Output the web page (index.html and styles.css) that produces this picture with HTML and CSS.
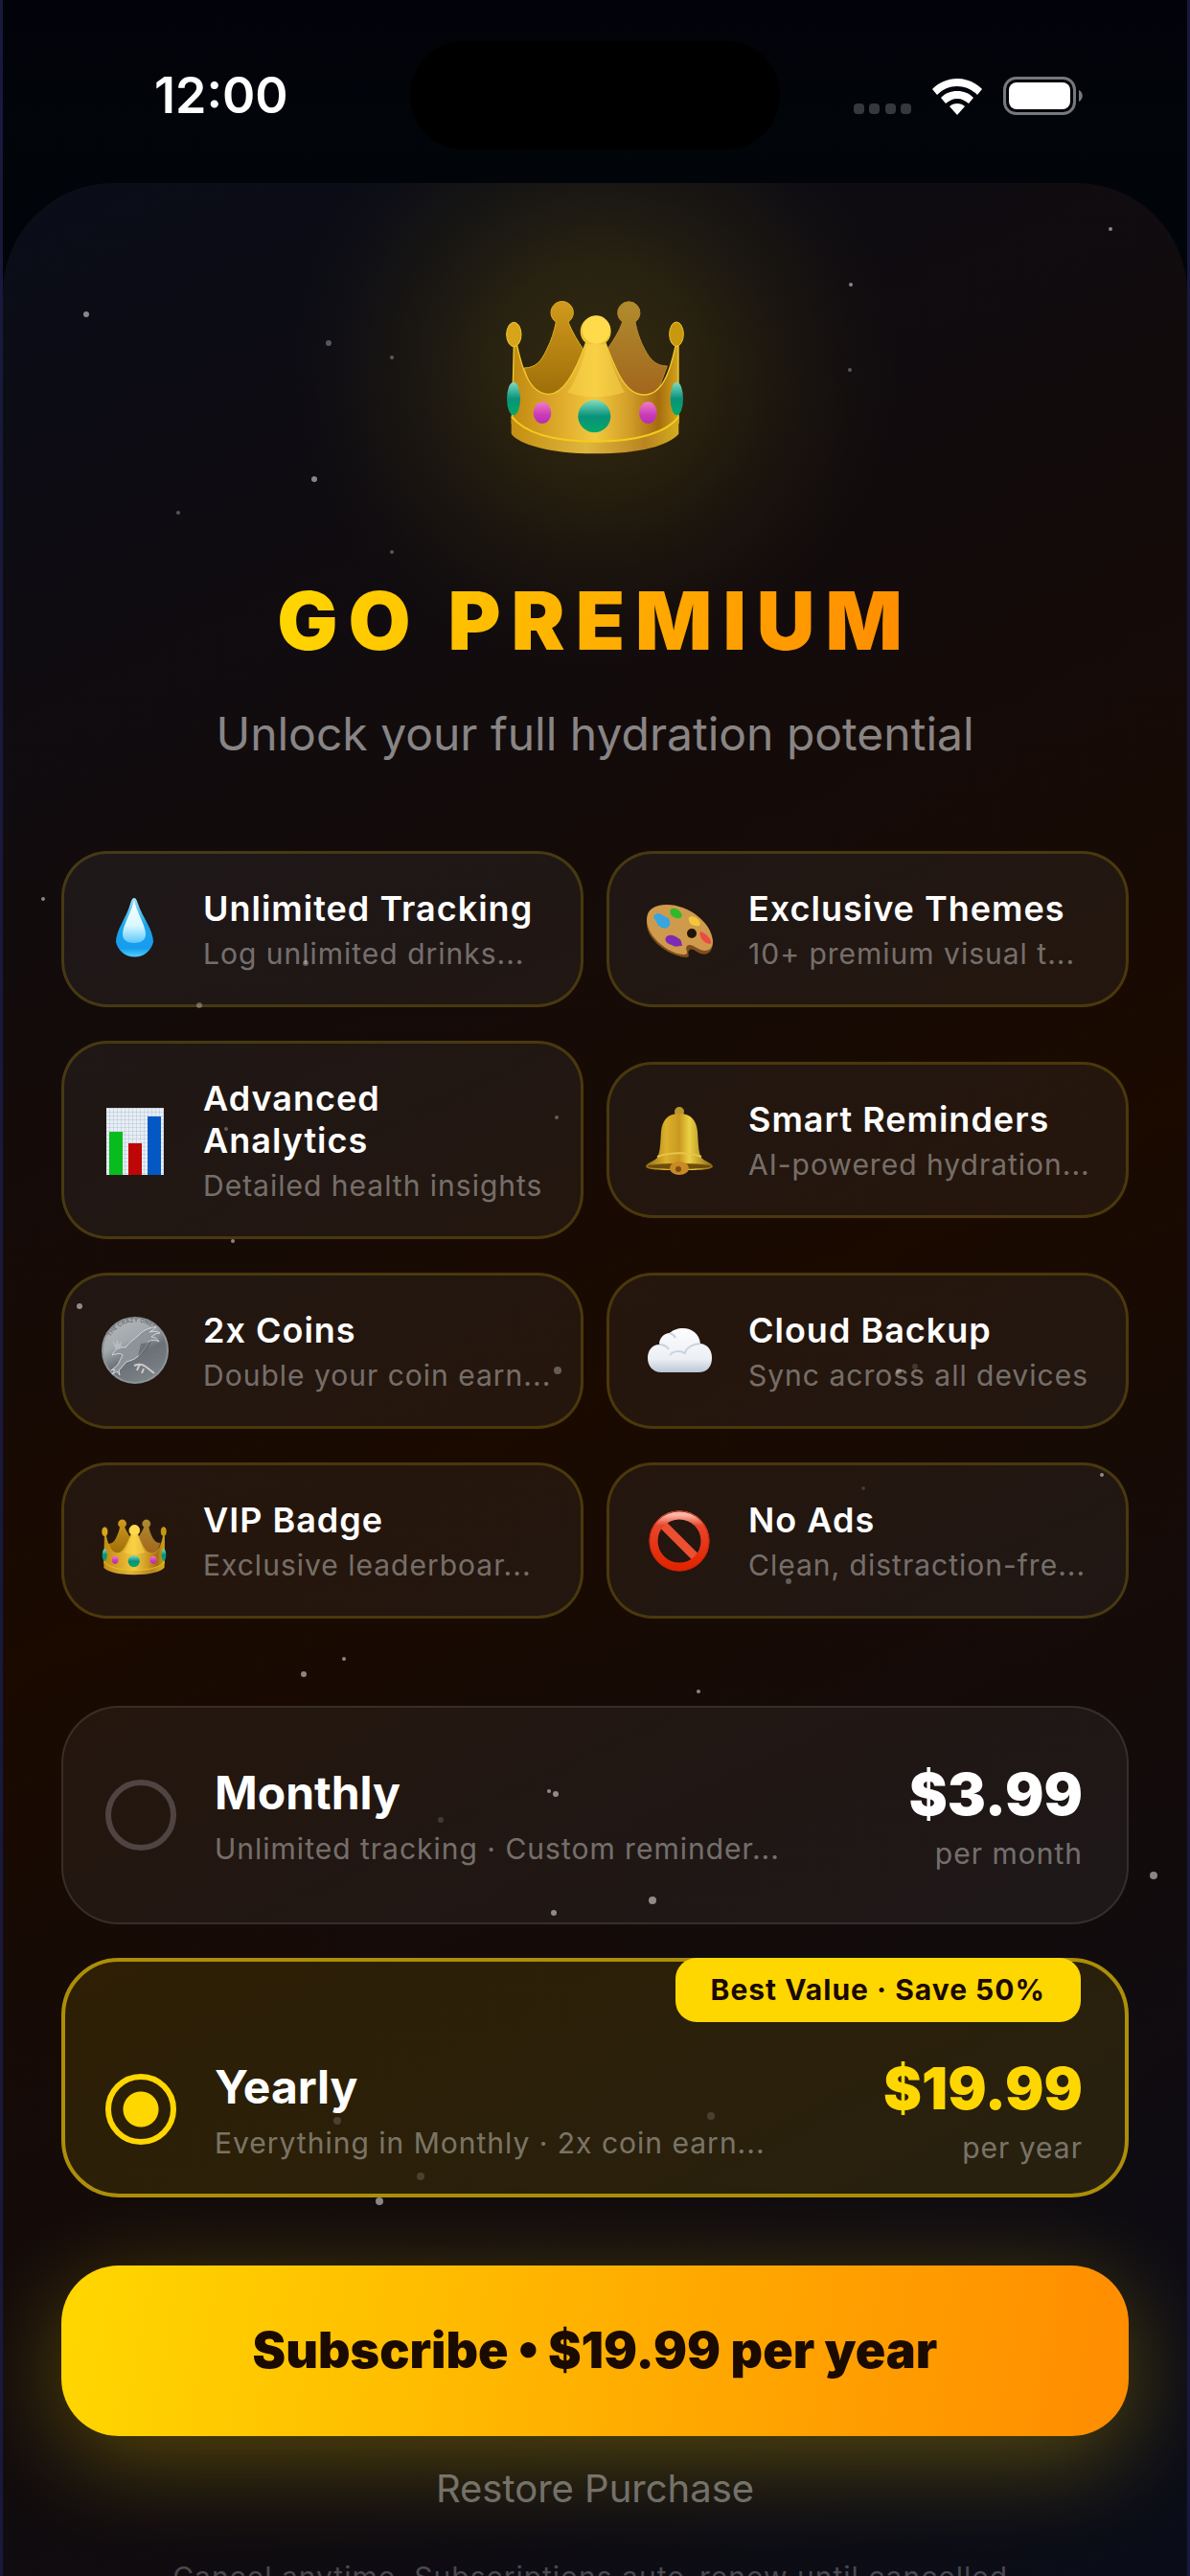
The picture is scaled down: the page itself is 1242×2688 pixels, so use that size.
FILE: index.html
```
<!DOCTYPE html>
<html lang="en">
<head>
    <meta charset="UTF-8">
    <meta name="viewport" content="width=device-width, initial-scale=1.0">
    <title>Go Premium</title>
    <link rel="stylesheet" href="styles.css">
</head>
<body>

<svg class="defs" aria-hidden="true">
    <defs>
        <linearGradient id="goldFront" x1="0" x2="1">
            <stop offset="0" stop-color="#c18a10"/>
            <stop offset=".3" stop-color="#e0ac2c"/>
            <stop offset=".5" stop-color="#f2c83e"/>
            <stop offset=".72" stop-color="#cf9a26"/>
            <stop offset=".88" stop-color="#a66c10"/>
            <stop offset="1" stop-color="#d2a41c"/>
        </linearGradient>
        <linearGradient id="goldBand" x1="0" x2="1">
            <stop offset="0" stop-color="#c48f12"/>
            <stop offset=".45" stop-color="#dfb53e"/>
            <stop offset=".8" stop-color="#b98420"/>
            <stop offset="1" stop-color="#d4ad1e"/>
        </linearGradient>
        <linearGradient id="goldBackL" x1="0" y1="0" x2="0" y2="1">
            <stop offset="0" stop-color="#d09a1c"/>
            <stop offset="1" stop-color="#9c6c08"/>
        </linearGradient>
        <linearGradient id="goldBackR" x1="0" y1="0" x2="0" y2="1">
            <stop offset="0" stop-color="#b08c2e"/>
            <stop offset="1" stop-color="#a2641c"/>
        </linearGradient>
        <linearGradient id="gemGreen" x1="0" y1="0" x2="0" y2="1">
            <stop offset="0" stop-color="#7fdcc0"/>
            <stop offset=".5" stop-color="#0a927a"/>
            <stop offset="1" stop-color="#04a868"/>
        </linearGradient>
        <linearGradient id="gemPink" x1="0" y1="0" x2="0" y2="1">
            <stop offset="0" stop-color="#f07cc4"/>
            <stop offset=".6" stop-color="#c93ab8"/>
            <stop offset="1" stop-color="#b52fb0"/>
        </linearGradient>
        <symbol id="crown" viewBox="225 3 630 630">
            <path fill="url(#goldBackL)" stroke="#e0ae22" stroke-width="3" d="M318 342c36 0 54-22 70-56 16-32 24-58 30-88a35 35 0 1 1 38 0c14 34 30 60 50 90l-40 150H350z"/>
            <path fill="url(#goldBackR)" stroke="#b5892a" stroke-width="3" d="M766 336c-36 0-54-22-70-52-16-30-24-56-30-86a35 35 0 1 0-40 0c-12 34-28 56-48 86l40 154h110z"/>
            <path fill="url(#goldFront)" stroke="#f0cb2e" stroke-width="4" d="M286 272h10c14 64 36 150 98 152 50 2 92-88 118-162a46 46 0 1 1 60 0c32 82 60 164 122 164 56 0 80-70 98-152h9v240c-80 80-430 80-521 0z"/>
            <ellipse cx="286" cy="237" rx="23" ry="38" fill="#d8a41c" stroke="#f0cc2c" stroke-width="3"/>
            <ellipse cx="795" cy="236" rx="22" ry="38" fill="#c8980f" stroke="#e8c528" stroke-width="3"/>
            <circle cx="544" cy="222" r="44" fill="#ffdb4c"/>
            <path fill="#ffdc50" opacity=".45" d="M514 268h60c20 70 40 120 60 150-60 20-130 20-180 0 30-40 46-90 60-150z"/>
            <path fill="url(#goldBand)" d="M278 490c40 50 130 84 262 84s226-34 262-84v58c-30 36-120 62-262 62s-240-30-262-62z"/>
            <path fill="none" stroke="#f4cc1c" stroke-width="6" d="M279 494c40 50 130 78 261 78s226-28 262-78"/>
            <ellipse cx="285" cy="438" rx="21" ry="52" fill="url(#gemGreen)"/>
            <ellipse cx="796" cy="438" rx="20" ry="52" fill="url(#gemGreen)"/>
            <circle cx="538" cy="493" r="51" fill="url(#gemGreen)"/>
            <ellipse cx="375" cy="482" rx="28" ry="34" fill="url(#gemPink)"/>
            <ellipse cx="706" cy="482" rx="28" ry="34" fill="url(#gemPink)"/>
        </symbol>
    </defs>
</svg>

<main class="screen">
    <header class="status-bar">
        <span class="time">12:00</span>
        <span class="island"></span>
        <span class="status-icons">
            <svg class="signal" viewBox="0 0 60 12" aria-hidden="true">
                <rect x="0" width="11" height="11" rx="4"/>
                <rect x="16" width="11" height="11" rx="4"/>
                <rect x="33" width="11" height="11" rx="4"/>
                <rect x="49" width="11" height="11" rx="4"/>
            </svg>
            <svg class="wifi" viewBox="0 0 52 38" aria-hidden="true">
                <path d="M26 0c10 0 19 4 26 11l-5 6C41 11 34 8 26 8S11 11 5 17l-5-6C7 4 16 0 26 0z"/>
                <path d="M26 13c7 0 12 2 17 7l-5 6c-4-3-7-5-12-5s-8 2-12 5l-5-6c5-5 10-7 17-7z"/>
                <path d="M26 26c3 0 6 1 8 3l-8 9-8-9c2-2 5-3 8-3z"/>
            </svg>
            <svg class="battery" viewBox="0 0 84 40" aria-hidden="true">
                <rect x="1.500" y="1.500" width="73" height="37" rx="12" fill="none" stroke="#77787a" stroke-width="3"/>
                <rect x="6" y="6" width="64" height="28" rx="8" fill="#fff"/>
                <path fill="#77787a" d="M79 14c5 2 5 10 0 12z"/>
            </svg>
        </span>
    </header>

    <section class="sheet">
        <div class="crown">
            <svg viewBox="0 0 210 210" aria-hidden="true"><use href="#crown" width="210" height="210"/></svg>
        </div>
        <h1>GO PREMIUM</h1>
        <p class="subtitle">Unlock your full hydration potential</p>

        <ul class="features">
            <li class="feature">
                <svg class="icon" viewBox="0 0 76 76" aria-hidden="true">
                    <defs>
                        <linearGradient id="drop" x1="0" y1="0" x2="0" y2="1">
                            <stop offset="0" stop-color="#9fe4fb"/>
                            <stop offset=".45" stop-color="#1ba5ea"/>
                            <stop offset=".85" stop-color="#169cee"/>
                            <stop offset="1" stop-color="#4fd2fb"/>
                        </linearGradient>
                        <linearGradient id="dropShine" x1="0" y1="0" x2="0" y2="1">
                            <stop offset="0" stop-color="#fff"/>
                            <stop offset=".6" stop-color="#d8f7ff"/>
                            <stop offset="1" stop-color="#5cc8fb"/>
                        </linearGradient>
                    </defs>
                    <path fill="url(#drop)" d="M38 5c2 0 3 3 4 6 5 15 16 27 16 40a20 20 0 0 1-39 0c0-13 11-25 15-40 1-3 2-6 4-6z"/>
                    <path fill="url(#dropShine)" d="M38 7c2 12 12 26 12 36 0 6-5 9-12 9s-12-3-12-9c0-10 10-24 12-36z"/>
                </svg>
                <div class="feature-text">
                    <h2>Unlimited Tracking</h2>
                    <p>Log unlimited drinks...</p>
                </div>
            </li>
            <li class="feature">
                <svg class="icon" viewBox="0 0 76 76" aria-hidden="true">
                    <path fill="#7d4f1c" d="M4 32c0-12 8-18 22-18 22 0 46 18 47 38 0 8-5 14-13 11-5-2-9-7-12-3-2 3 2 6-2 7C30 67 4 50 4 32z"/>
                    <path fill="#cf9a4c" d="M4 28c0-11 8-16 21-16 23 0 47 19 48 38 0 8-5 12-13 9-5-2-10-7-14-4-3 3 3 8-2 9C29 65 4 46 4 28z"/>
                    <path fill="#37a5df" d="M13 22c4-3 7 1 11 3 4 1 5 5 4 8-1 4-6 5-10 2-4-2-3-6-6-8-1-2-1-4 1-5z"/>
                    <path fill="#2fb82c" d="M29 17c3-3 9 0 11 4 2 4-1 6-5 5-5-1-8-5-6-9z"/>
                    <path fill="#f2c73a" d="M48 25c4-2 9 1 11 4 2 4 0 6-4 5-5 0-8-4-7-9z"/>
                    <path fill="#ee4a44" d="M60 40c4 1 9 5 11 10 1 4-2 3-5 2-4-2-8-8-6-12z"/>
                    <path fill="#7d2bb4" d="M24 46c4-4 9-2 13 1 4 2 3 5 4 8-4 0-7 2-11-1-4-1-8-4-6-8z"/>
                    <circle cx="51" cy="42" r="5" fill="#211308"/>
                </svg>
                <div class="feature-text">
                    <h2>Exclusive Themes</h2>
                    <p>10+ premium visual t...</p>
                </div>
            </li>
            <li class="feature">
                <svg class="icon" viewBox="0 0 76 76" aria-hidden="true">
                    <defs>
                        <pattern id="grid" width="4" height="4" patternUnits="userSpaceOnUse">
                            <path d="M4 0H0v4" fill="none" stroke="#b4c4d4"/>
                        </pattern>
                    </defs>
                    <rect x="9" y="4" width="60" height="70" fill="#e8eef5"/>
                    <rect x="9" y="4" width="60" height="70" fill="url(#grid)"/>
                    <rect x="12" y="29" width="14" height="45" fill="#06bd1d"/>
                    <rect x="32" y="41" width="14" height="33" fill="#bd0606"/>
                    <rect x="52" y="13" width="14" height="61" fill="#0458c4"/>
                </svg>
                <div class="feature-text">
                    <h2>Advanced<br>Analytics</h2>
                    <p>Detailed health insights</p>
                </div>
            </li>
            <li class="feature">
                <svg class="icon" viewBox="0 0 76 76" aria-hidden="true">
                    <defs>
                        <linearGradient id="bell" x1="0" x2="1">
                            <stop offset="0" stop-color="#8f6a12"/>
                            <stop offset=".3" stop-color="#dcb12c"/>
                            <stop offset=".5" stop-color="#c9981f"/>
                            <stop offset=".65" stop-color="#ecd044"/>
                            <stop offset="1" stop-color="#8a6410"/>
                        </linearGradient>
                    </defs>
                    <circle cx="38" cy="8" r="5" fill="#b8962c"/>
                    <path fill="url(#bell)" d="M38 10c12 0 18 7 19 19 1 15 1 21 4 27 3 4 11 5 12 9 0 4-16 4-35 4S3 69 3 65c1-4 9-5 12-9 3-6 3-12 4-27 1-12 7-19 19-19z"/>
                    <ellipse cx="38" cy="65" rx="33" ry="3" fill="#6e4c0c"/>
                    <path fill="none" stroke="#e8c546" stroke-width="2" d="M15 55c13-5 33-5 46 0"/>
                    <ellipse cx="38" cy="67" rx="10" ry="7" fill="#c98a24"/>
                    <circle cx="37" cy="68" r="3" fill="#7b4f10"/>
                </svg>
                <div class="feature-text">
                    <h2>Smart Reminders</h2>
                    <p>AI-powered hydration...</p>
                </div>
            </li>
            <li class="feature">
                <svg class="icon" viewBox="0 0 76 76" aria-hidden="true">
                    <defs>
                        <linearGradient id="coin" x1=".2" y1="0" x2=".7" y2="1">
                            <stop offset="0" stop-color="#b4b8bb"/>
                            <stop offset=".35" stop-color="#a3a8ac"/>
                            <stop offset=".6" stop-color="#6a7075"/>
                            <stop offset="1" stop-color="#7d858a"/>
                        </linearGradient>
                        <path id="coinArc" d="M13 23A30 30 0 0 1 62 18"/>
                    </defs>
                    <circle cx="39" cy="37" r="34" fill="url(#coin)" stroke="#8e9498" stroke-width="2"/>
                    <text class="coin-text"><textPath href="#coinArc">THE CRAZY ONES</textPath></text>
                    <text class="coin-text" x="53" y="45">2020</text>
                    <path fill="#8d9499" stroke="#d3d6d8" d="M15 42c3-6 8-9 14-8 4-6 10-9 14-13 5-6 12-7 18-9-2 3-5 5-7 6 4-1 8-1 11 1-4 0-7 2-9 4 4 0 6 2 8 5-4-2-8-2-11 0-2 5-6 11-12 16-3 3-8 4-11 5l-8 9 1 5-3-4-5 3 3-5-4 1 7-6 5-10c-3-3-7-1-11 0z"/>
                    <path fill="#b6bbbe" d="M15 26l4 5 1-6 2 6 3-4-1 8-5 2z"/>
                    <path fill="none" stroke="#cfc9c8" stroke-width="2" d="M38 53c5-2 8-2 12 1l9 7M44 51l-3 7M48 56l-2 5"/>
                    <path fill="#4c5257" opacity=".5" d="M45 30c4 0 8-1 11-3-2 6-7 12-14 16z"/>
                </svg>
                <div class="feature-text">
                    <h2>2x Coins</h2>
                    <p>Double your coin earn...</p>
                </div>
            </li>
            <li class="feature">
                <svg class="icon" viewBox="0 0 76 76" aria-hidden="true">
                    <defs>
                        <linearGradient id="cloud" x1="0" y1="0" x2="0" y2="1">
                            <stop offset="0" stop-color="#fdfdff"/>
                            <stop offset=".7" stop-color="#eceff4"/>
                            <stop offset="1" stop-color="#b9c6d4"/>
                        </linearGradient>
                    </defs>
                    <path fill="url(#cloud)" d="M19 60C10 60 5 53 5 45c0-8 5-14 12-14 0-7 5-12 11-12 3-3 8-5 14-5 9 0 17 6 18 16 8 1 12 7 12 15 0 9-5 15-14 15z"/>
                    <path fill="none" stroke="#c9d2de" stroke-width="2" d="M17 31c5 0 8 2 10 5M28 42c4-5 13-5 16-1M44 40c1-6 9-10 16-10M28 19c3 1 5 3 6 5"/>
                </svg>
                <div class="feature-text">
                    <h2>Cloud Backup</h2>
                    <p>Sync across all devices</p>
                </div>
            </li>
            <li class="feature">
                <svg class="icon" viewBox="0 0 76 76" aria-hidden="true"><use href="#crown" width="76" height="76"/></svg>
                <div class="feature-text">
                    <h2>VIP Badge</h2>
                    <p>Exclusive leaderboar...</p>
                </div>
            </li>
            <li class="feature">
                <svg class="icon" viewBox="0 0 76 76" aria-hidden="true">
                    <defs>
                        <linearGradient id="ban" x1="0" y1="0" x2="0" y2="1">
                            <stop offset="0" stop-color="#f9b6a6"/>
                            <stop offset=".2" stop-color="#e8452b"/>
                            <stop offset="1" stop-color="#e32400"/>
                        </linearGradient>
                    </defs>
                    <path stroke="#ec5030" stroke-width="9" d="M20 20l36 36"/>
                    <circle cx="38" cy="38" r="27" fill="none" stroke="url(#ban)" stroke-width="9"/>
                    <circle cx="38" cy="38" r="31" fill="none" stroke="#c92408" stroke-width="1"/>
                </svg>
                <div class="feature-text">
                    <h2>No Ads</h2>
                    <p>Clean, distraction-fre...</p>
                </div>
            </li>
        </ul>

        <form class="plans">
            <label class="plan">
                <input type="radio" name="plan" value="monthly">
                <span class="plan-info">
                    <span class="plan-name">Monthly</span>
                    <span class="plan-desc">Unlimited tracking · Custom reminder...</span>
                </span>
                <span class="plan-cost">
                    <span class="price">$3.99</span>
                    <span class="period">per month</span>
                </span>
            </label>
            <label class="plan selected">
                <span class="badge">Best Value · Save 50%</span>
                <input type="radio" name="plan" value="yearly" checked>
                <span class="plan-info">
                    <span class="plan-name">Yearly</span>
                    <span class="plan-desc">Everything in Monthly · 2x coin earn...</span>
                </span>
                <span class="plan-cost">
                    <span class="price">$19.99</span>
                    <span class="period">per year</span>
                </span>
            </label>
            <button type="submit" class="subscribe">Subscribe • $19.99 per year</button>
        </form>

        <button type="button" class="restore">Restore Purchase</button>
        <p class="terms">Cancel anytime. Subscriptions auto-renew until cancelled.</p>
    </section>

    <!-- floating particles -->
    <svg class="particles" viewBox="0 0 1242 2688" preserveAspectRatio="xMidYMin slice" aria-hidden="true">
        <g opacity=".5">
            <circle cx="90" cy="328" r="3"/>
            <circle cx="888" cy="297" r="2"/>
            <circle cx="1159" cy="239" r="2"/>
            <circle cx="328" cy="500" r="3"/>
            <circle cx="45" cy="938" r="2"/>
            <circle cx="243" cy="1295" r="2"/>
            <circle cx="83" cy="1363" r="3"/>
            <circle cx="1150" cy="1539" r="2"/>
            <circle cx="729" cy="1765" r="2"/>
            <circle cx="573" cy="1869" r="2"/>
            <circle cx="580" cy="1872" r="3"/>
            <circle cx="578" cy="1996" r="3"/>
            <circle cx="681" cy="1983" r="4"/>
            <circle cx="1204" cy="1957" r="4"/>
            <circle cx="396" cy="2297" r="4"/>
            <circle cx="317" cy="1747" r="3"/>
            <circle cx="359" cy="1731" r="2"/>
        </g>
        <g opacity=".3">
            <circle cx="343" cy="358" r="3"/>
            <circle cx="409" cy="373" r="2"/>
            <circle cx="887" cy="386" r="2"/>
            <circle cx="186" cy="535" r="2"/>
            <circle cx="409" cy="576" r="2"/>
            <circle cx="319" cy="1005" r="3"/>
            <circle cx="208" cy="1049" r="3"/>
            <circle cx="581" cy="1166" r="2"/>
            <circle cx="236" cy="1178" r="2"/>
            <circle cx="582" cy="1430" r="4"/>
            <circle cx="938" cy="1431" r="3"/>
            <circle cx="823" cy="1650" r="3"/>
        </g>
        <g opacity=".15">
            <circle cx="955" cy="1426" r="3"/>
            <circle cx="901" cy="1553" r="2"/>
            <circle cx="460" cy="1899" r="3"/>
            <circle cx="352" cy="2213" r="4"/>
            <circle cx="742" cy="2208" r="4"/>
            <circle cx="439" cy="2271" r="4"/>
        </g>
    </svg>
</main>

</body>
</html>
```
FILE: styles.css
```
* {
    box-sizing: border-box;
}
body {
    margin: 0;
    font-family: Inter, 'Liberation Sans', sans-serif;
    color: #fff;
    background: #02040a;
}
h1, h2, p, ul {
    margin: 0;
    padding: 0;
}
button {
    font-family: inherit;
    border: none;
    cursor: pointer;
}
.defs {
    position: absolute;
    width: 0;
    height: 0;
}
.screen {
    position: relative;
    height: 100vh;
    overflow: hidden;
    display: flex;
    flex-direction: column;
    border: solid #18193c;
    border-width: 0 3px;
    background: linear-gradient(#02030a, #010509 191px);
}

/* status bar */
.status-bar {
    flex: none;
    display: grid;
    grid-template-columns: minmax(0, 1fr) 386px minmax(0, 1fr);
    align-items: center;
    height: 191px;
    padding: 8px 108px 0;
}
.time {
    padding-left: 50px;
    font-size: 52px;
    font-weight: 600;
    line-height: 60px;
}
.island {
    height: 113px;
    border-radius: 57px;
    background: #000;
}
.status-icons {
    display: flex;
    align-items: flex-end;
    justify-content: flex-end;
    gap: 22px;
}
.signal {
    width: 60px;
    height: 12px;
    fill: #36383b;
}
.wifi {
    width: 52px;
    height: 38px;
    fill: #fff;
}
.battery {
    width: 84px;
    height: 40px;
}

/* sheet */
.sheet {
    flex: none;
    display: flex;
    flex-direction: column;
    min-height: calc(100vh - 191px);
    padding: 80px 61px 0;
    border-radius: 115px 115px 0 0;
    background:
        radial-gradient(circle at 50% 190px, rgba(255, 215, 0, .14), rgba(255, 215, 0, .11) 100px, rgba(255, 215, 0, .05) 190px, rgba(255, 215, 0, .01) 270px, rgba(255, 215, 0, 0) 320px),
        linear-gradient(154deg, #0a0d19, #1a0a00 50%, #0a0d19);
}
.crown {
    align-self: center;
    height: 210px;
}
.crown svg {
    display: block;
    width: 210px;
    height: 210px;
}
h1 {
    align-self: center;
    margin-top: 117px;
    font-size: 84px;
    font-weight: 900;
    line-height: 100px;
    letter-spacing: 11px;
    background: linear-gradient(100deg, #ffd700, #ffa800 60%, #ff8c00);
    -webkit-background-clip: text;
    background-clip: text;
    color: transparent;
}
.subtitle {
    margin-top: 38px;
    font-size: 48px;
    line-height: 60px;
    text-align: center;
    color: rgba(255, 255, 255, .5);
}

/* features */
.features {
    display: grid;
    grid-template-columns: repeat(2, minmax(0, 1fr));
    gap: 35px 24px;
    align-items: center;
    margin-top: 92px;
    list-style: none;
}
.feature {
    display: flex;
    align-items: center;
    gap: 34px;
    padding: 35px;
    border: 3px solid rgba(255, 215, 0, .18);
    border-radius: 48px;
    background: rgba(255, 255, 255, .05);
}
.icon {
    flex: none;
    width: 76px;
    height: 76px;
}
.coin-text {
    font-size: 6px;
    font-weight: 700;
    fill: #6f7579;
}
.feature-text {
    flex: 1;
    min-width: 0;
    white-space: nowrap;
}
.feature h2 {
    font-size: 36px;
    font-weight: 600;
    line-height: 44px;
    letter-spacing: 1px;
}
.feature p {
    margin-top: 7px;
    font-size: 30px;
    line-height: 36px;
    letter-spacing: 1px;
    color: rgba(255, 255, 255, .4);
}

/* plans */
.plans {
    display: flex;
    flex-direction: column;
    gap: 35px;
    margin-top: 91px;
}
.plan {
    position: relative;
    display: flex;
    align-items: center;
    gap: 40px;
    padding: 54px 46px 54px 44px;
    border: 2px solid rgba(255, 255, 255, .1);
    border-radius: 60px;
    background: rgba(255, 255, 255, .05);
    cursor: pointer;
}
.plan.selected {
    padding: 96px 44px 30px 42px;
    border: 4px solid #ac8e08;
    background: rgba(255, 215, 0, .1);
}
.plan input {
    flex: none;
    appearance: none;
    width: 74px;
    height: 74px;
    margin: 0;
    border: 6px solid #4f4442;
    border-radius: 50%;
}
.plan input:checked {
    border-color: #ffd700;
    background: radial-gradient(circle, #ffd700 18px, transparent 19px);
}
.plan-info, .plan-cost {
    display: flex;
    flex-direction: column;
    white-space: nowrap;
}
.plan-info {
    flex: 1;
    min-width: 0;
    gap: 10px;
}
.plan-cost {
    align-items: flex-end;
    gap: 8px;
}
.plan-name {
    font-size: 48px;
    font-weight: 700;
    line-height: 60px;
}
.plan-desc, .period {
    font-size: 30px;
    line-height: 36px;
    letter-spacing: 1px;
    color: rgba(255, 255, 255, .4);
}
.price {
    font-size: 60px;
    font-weight: 900;
    line-height: 72px;
}
.selected .price {
    color: #ffd700;
}
.badge {
    position: absolute;
    top: -4px;
    right: 46px;
    padding: 15px 37px 16px;
    border-radius: 22px;
    font-size: 30px;
    font-weight: 700;
    line-height: 36px;
    letter-spacing: 1px;
    white-space: nowrap;
    color: #1a0a00;
    background: #ffd700;
}

/* actions */
.subscribe {
    margin-top: 36px;
    padding: 57px 40px;
    border-radius: 60px;
    font-size: 52px;
    font-weight: 900;
    line-height: 64px;
    color: #1a0a00;
    background: linear-gradient(100deg, #ffd700, #ffa800 60%, #ff8c00);
    box-shadow: 0 24px 100px rgba(255, 215, 0, .3);
}
.restore {
    margin-top: 31px;
    padding: 0;
    font-size: 40px;
    line-height: 48px;
    color: rgba(255, 255, 255, .4);
    background: none;
}
.terms {
    margin-top: 50px;
    font-size: 30px;
    line-height: 36px;
    letter-spacing: 1px;
    text-align: center;
    color: rgba(255, 255, 255, .25);
}

.particles {
    position: absolute;
    inset: 0;
    width: 100%;
    height: 100%;
    fill: #fff;
    pointer-events: none;
}
```
